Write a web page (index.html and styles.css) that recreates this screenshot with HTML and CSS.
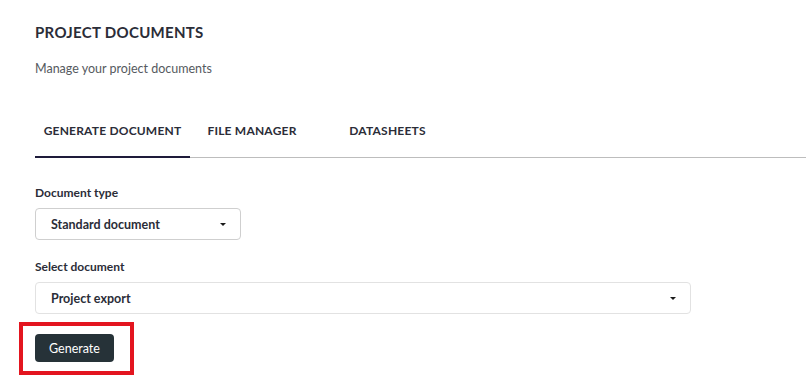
FILE: index.html
```html
<!DOCTYPE html>
<html>
<head>
    <title>Project Documents</title>
    <link rel="stylesheet" href="styles.css">
</head>
<body>
    <div class="page">
        <h1 class="title">PROJECT DOCUMENTS</h1>
        <p class="subtitle">Manage your project documents</p>

        <div class="tabs">
            <div class="tab tab-active tab-generate">GENERATE DOCUMENT</div>
            <div class="tab tab-files">FILE MANAGER</div>
            <div class="tab tab-sheets">DATASHEETS</div>
        </div>

        <div class="form-group">
            <label class="label">Document type</label>
            <div class="select select-small">
                <span>Standard document</span>
                <span class="caret"></span>
            </div>
        </div>

        <div class="form-group">
            <label class="label">Select document</label>
            <div class="select select-wide">
                <span>Project export</span>
                <span class="caret"></span>
            </div>
        </div>

        <div class="highlight">
            <button class="btn">Generate</button>
        </div>
    </div>
</body>
</html>
```

FILE: styles.css
```css
body {
    margin: 0;
    background: #ffffff;
    font-family: Lato, "Open Sans", sans-serif;
    color: #2b2d38;
}
.page {
    padding: 23px 0 0 35px;
}
.title {
    margin: 0;
    font-size: 15px;
    font-weight: 700;
    letter-spacing: 0.3px;
    line-height: 18px;
}
.subtitle {
    margin: 20px 0 0;
    font-size: 12.5px;
    color: #555a60;
    line-height: 15px;
}
.tabs {
    display: flex;
    margin-top: 40px;
    border-bottom: 1px solid #bdbdbd;
}
.tab {
    font-size: 12px;
    font-weight: 700;
    letter-spacing: 0.2px;
    padding: 7px 0 18px;
    line-height: 15px;
    box-sizing: border-box;
    color: #2b2d38;
}
.tab-generate {
    width: 155px;
    text-align: center;
}
.tab-files {
    width: 124px;
    text-align: center;
}
.tab-sheets {
    width: 147px;
    text-align: center;
}
.tab-active {
    border-bottom: 2px solid #1e1b3a;
    margin-bottom: -1px;
}
.form-group {
    margin-top: 27px;
}
.form-group + .form-group {
    margin-top: 19px;
}
.label {
    display: block;
    font-size: 12px;
    font-weight: 700;
    line-height: 15px;
    margin-bottom: 8px;
}
.select {
    height: 32px;
    box-sizing: border-box;
    border: 1px solid #cfcfcf;
    border-radius: 4px;
    display: flex;
    align-items: center;
    justify-content: space-between;
    padding: 0 14px 0 15px;
    font-size: 12.5px;
    font-weight: 700;
}
.select-small {
    width: 206px;
}
.select-wide {
    width: 656px;
    border-color: #e2e2e2;
}
.caret {
    width: 0;
    height: 0;
    border-left: 3px solid transparent;
    border-right: 3px solid transparent;
    border-top: 3px solid #1a1a1a;
}
.highlight {
    margin: 8px 0 0 -16px;
    width: 115px;
    height: 53px;
    box-sizing: border-box;
    border: 4px solid #e3151f;
    padding: 8px 0 0 12px;
}
.btn {
    width: 79px;
    height: 28px;
    background: #263238;
    color: #ffffff;
    border: none;
    border-radius: 4px;
    font-family: Lato, "Open Sans", sans-serif;
    font-size: 12.5px;
    cursor: pointer;
}
```
